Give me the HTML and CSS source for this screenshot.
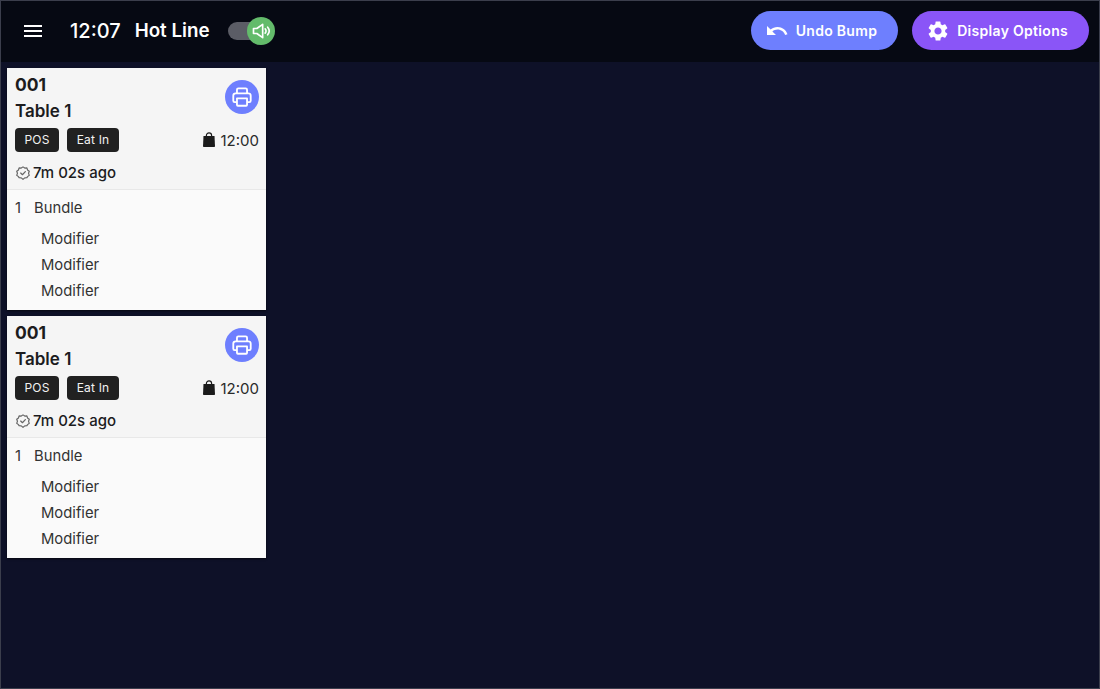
FILE: index.html
```html
<!DOCTYPE html>
<html lang="en">
<head>
    <meta charset="UTF-8">
    <meta name="viewport" content="width=device-width, initial-scale=1.0">
    <title>Hot Line</title>
    <link rel="stylesheet" href="styles.css">
</head>
<body>
    <div class="screen">
        <header class="topbar">
            <button class="menu-btn" aria-label="Menu">
                <svg width="24" height="24" viewBox="0 0 24 24" fill="#fff"><path d="M3 18h18v-2H3v2zm0-5h18v-2H3v2zm0-7v2h18V6H3z"/></svg>
            </button>
            <span class="clock">12:07</span>
            <span class="line-name">Hot Line</span>
            <div class="sound-toggle">
                <div class="sound-track"></div>
                <div class="sound-thumb">
                    <svg width="20" height="20" viewBox="0 0 24 24" fill="none" stroke="#fff" stroke-width="2" stroke-linejoin="round" stroke-linecap="round"><path d="M3 9v6h4l7 5V4L7 9H3z"/><path d="M17 9.500a3.500 3.500 0 0 1 0 5"/><path d="M20 7.500a7 7 0 0 1 0 9"/></svg>
                </div>
            </div>
            <div class="topbar-actions">
                <button class="pill pill-blue">
                    <svg width="24" height="24" viewBox="0 0 24 24" fill="#fff"><path d="M12.5 8c-2.65 0-5.05.99-6.9 2.6L2 7v9h9l-3.62-3.62c1.39-1.16 3.16-1.88 5.12-1.88 3.54 0 6.55 2.31 7.6 5.5l2.37-.78C21.08 11.03 17.15 8 12.5 8z"/></svg>
                    Undo Bump
                </button>
                <button class="pill pill-purple">
                    <svg width="24" height="24" viewBox="0 0 24 24" fill="#fff"><path d="M19.14 12.94c.04-.3.06-.61.06-.94 0-.32-.02-.64-.07-.94l2.03-1.58a.49.49 0 0 0 .12-.61l-1.92-3.32a.488.488 0 0 0-.59-.22l-2.39.96c-.5-.38-1.03-.7-1.62-.94l-.36-2.54a.484.484 0 0 0-.48-.41h-3.84c-.24 0-.43.17-.47.41l-.36 2.54c-.59.24-1.13.57-1.62.94l-2.39-.96c-.22-.08-.47 0-.59.22L2.74 8.87c-.12.21-.08.47.12.61l2.03 1.58c-.05.3-.09.63-.09.94s.02.64.07.94l-2.03 1.58a.49.49 0 0 0-.12.61l1.92 3.32c.12.22.37.29.59.22l2.39-.96c.5.38 1.03.7 1.62.94l.36 2.54c.05.24.24.41.48.41h3.84c.24 0 .44-.17.47-.41l.36-2.54c.59-.24 1.13-.56 1.62-.94l2.39.96c.22.08.47 0 .59-.22l1.92-3.32c.12-.22.07-.47-.12-.61l-2.01-1.58zM12 15.6c-1.98 0-3.6-1.62-3.6-3.6s1.62-3.6 3.6-3.6 3.6 1.62 3.6 3.6-1.62 3.6-3.6 3.6z"/></svg>
                    Display Options
                </button>
            </div>
        </header>

        <main class="orders">
            <article class="ticket">
                <div class="ticket-head">
                    <div class="ticket-top">
                        <div>
                            <div class="ticket-num">001</div>
                            <div class="ticket-table">Table 1</div>
                        </div>
                        <button class="print-btn" aria-label="Print">
                            <svg width="22" height="22" viewBox="0 0 24 24" fill="none" stroke="#fff" stroke-width="2" stroke-linejoin="round"><path d="M6.500 8V4a1.500 1.500 0 0 1 1.500-1.500h8A1.500 1.500 0 0 1 17.500 4v4"/><path d="M6.500 17.500H4A1.500 1.500 0 0 1 2.500 16v-5.500A2.500 2.500 0 0 1 5 8h14a2.500 2.500 0 0 1 2.500 2.500V16a1.500 1.500 0 0 1-1.500 1.500h-2.500"/><path d="M6.500 13.500h11v7a1 1 0 0 1-1 1h-9a1 1 0 0 1-1-1z"/></svg>
                        </button>
                    </div>
                    <div class="ticket-meta">
                        <span class="tag">POS</span>
                        <span class="tag">Eat In</span>
                        <span class="due">
                            <svg width="16" height="16" viewBox="0 0 16 16"><path fill="#1b1b1b" d="M2.500 4h11l.5 10.200a.8.800 0 0 1-.8.800H2.800a.8.800 0 0 1-.8-.800z"/><path fill="none" stroke="#1b1b1b" stroke-width="1.200" d="M5.400 6V3.400a2.600 2.600 0 0 1 5.200 0V6"/></svg>
                            12:00
                        </span>
                    </div>
                    <div class="ticket-age">
                        <svg width="14" height="14" viewBox="0 0 24 24" fill="none" stroke="#666" stroke-width="2" stroke-linecap="round" stroke-linejoin="round"><path d="M12 1.500l3 2.100 3.700-.3 1.100 3.500 3 2.200-1.300 3.500 1.300 3.500-3 2.200-1.100 1.800-3.700.3-3 2.700-3-2.700-3.700-.3-1.100-1.800-3-2.200 1.300-3.500-1.300-3.500 3-2.200 1.100-3.500 3.700.3z"/><path d="M8 12l3 3 5-5.500"/></svg>
                        7m 02s ago
                    </div>
                </div>
                <div class="ticket-body">
                    <div class="item"><span class="qty">1</span>Bundle</div>
                    <div class="modifier">Modifier</div>
                    <div class="modifier">Modifier</div>
                    <div class="modifier">Modifier</div>
                </div>
            </article>

            <article class="ticket">
                <div class="ticket-head">
                    <div class="ticket-top">
                        <div>
                            <div class="ticket-num">001</div>
                            <div class="ticket-table">Table 1</div>
                        </div>
                        <button class="print-btn" aria-label="Print">
                            <svg width="22" height="22" viewBox="0 0 24 24" fill="none" stroke="#fff" stroke-width="2" stroke-linejoin="round"><path d="M6.500 8V4a1.500 1.500 0 0 1 1.500-1.500h8A1.500 1.500 0 0 1 17.500 4v4"/><path d="M6.500 17.500H4A1.500 1.500 0 0 1 2.500 16v-5.500A2.500 2.500 0 0 1 5 8h14a2.500 2.500 0 0 1 2.500 2.500V16a1.500 1.500 0 0 1-1.500 1.500h-2.500"/><path d="M6.500 13.500h11v7a1 1 0 0 1-1 1h-9a1 1 0 0 1-1-1z"/></svg>
                        </button>
                    </div>
                    <div class="ticket-meta">
                        <span class="tag">POS</span>
                        <span class="tag">Eat In</span>
                        <span class="due">
                            <svg width="16" height="16" viewBox="0 0 16 16"><path fill="#1b1b1b" d="M2.500 4h11l.5 10.200a.8.800 0 0 1-.8.800H2.800a.8.800 0 0 1-.8-.800z"/><path fill="none" stroke="#1b1b1b" stroke-width="1.200" d="M5.400 6V3.400a2.600 2.600 0 0 1 5.200 0V6"/></svg>
                            12:00
                        </span>
                    </div>
                    <div class="ticket-age">
                        <svg width="14" height="14" viewBox="0 0 24 24" fill="none" stroke="#666" stroke-width="2" stroke-linecap="round" stroke-linejoin="round"><path d="M12 1.500l3 2.100 3.700-.3 1.100 3.500 3 2.200-1.300 3.500 1.300 3.500-3 2.200-1.100 1.800-3.700.3-3 2.700-3-2.700-3.700-.3-1.100-1.800-3-2.200 1.300-3.500-1.300-3.500 3-2.200 1.100-3.500 3.700.3z"/><path d="M8 12l3 3 5-5.500"/></svg>
                        7m 02s ago
                    </div>
                </div>
                <div class="ticket-body">
                    <div class="item"><span class="qty">1</span>Bundle</div>
                    <div class="modifier">Modifier</div>
                    <div class="modifier">Modifier</div>
                    <div class="modifier">Modifier</div>
                </div>
            </article>
        </main>
    </div>
</body>
</html>
```

FILE: styles.css
```css
html, body {
    margin: 0;
    height: 100%;
}
body {
    font-family: Inter, "Liberation Sans", sans-serif;
    background-color: #0e1128;
}
button {
    font-family: inherit;
    border: none;
    cursor: pointer;
}
.screen {
    box-sizing: border-box;
    height: 689px;
    border: 1px solid #3b3e4c;
    background-color: #0e1128;
    display: flex;
    flex-direction: column;
}
.topbar {
    box-sizing: border-box;
    height: 61px;
    flex-shrink: 0;
    padding: 10px 10px 0 20px;
    display: flex;
    align-items: flex-start;
    background-color: #060913;
    color: #fff;
}
.menu-btn {
    background: none;
    padding: 0;
    width: 24px;
    height: 24px;
    margin-top: 8px;
    display: flex;
}
.clock {
    margin-left: 25px;
    margin-top: 8px;
    font-size: 20px;
    line-height: 24px;
    font-weight: 500;
}
.line-name {
    margin-left: 14px;
    margin-top: 8px;
    font-size: 18.800px;
    line-height: 24px;
    font-weight: 600;
}
.sound-toggle {
    position: relative;
    margin-left: 18px;
    margin-top: 6px;
    width: 47px;
    height: 28px;
}
.sound-track {
    position: absolute;
    left: 0;
    top: 5px;
    width: 38px;
    height: 18px;
    border-radius: 9px;
    background-color: #5b5d66;
}
.sound-thumb {
    position: absolute;
    right: 0;
    top: 0;
    width: 28px;
    height: 28px;
    border-radius: 50%;
    background-color: #63bb6b;
    display: flex;
    align-items: center;
    justify-content: center;
}
.topbar-actions {
    margin-left: auto;
    display: flex;
    gap: 14px;
}
.pill {
    height: 39px;
    border-radius: 20px;
    padding: 0 21px 0 14px;
    display: flex;
    align-items: center;
    gap: 7px;
    color: #fff;
    font-size: 14px;
    font-weight: 600;
    letter-spacing: 0.3px;
}
.pill-blue {
    background-color: #6e7ffe;
}
.pill-purple {
    background-color: #8a55f7;
}
.orders {
    padding: 6px 0 0 6px;
    display: flex;
    flex-direction: column;
    gap: 6px;
}
.ticket {
    width: 259px;
    box-shadow: 0 1px 2px rgba(0, 0, 0, 0.6);
    color: #1c1c1e;
}
.ticket-head {
    box-sizing: border-box;
    height: 122px;
    padding: 6px 7px 0 8px;
    background-color: #f5f5f5;
    border-bottom: 1px solid #e8e8e8;
}
.ticket-top {
    display: flex;
    justify-content: space-between;
}
.ticket-num {
    font-size: 17.500px;
    line-height: 22px;
    font-weight: 700;
}
.ticket-table {
    margin-top: 4px;
    font-size: 17px;
    line-height: 22px;
    font-weight: 600;
}
.print-btn {
    width: 34px;
    height: 34px;
    margin-top: 6px;
    padding: 0;
    border-radius: 50%;
    background-color: #6e7ffe;
    display: flex;
    align-items: center;
    justify-content: center;
}
.ticket-meta {
    margin-top: 6px;
    display: flex;
    align-items: center;
    gap: 8px;
}
.tag {
    height: 24px;
    padding: 0 9.500px;
    border-radius: 4px;
    background-color: #212121;
    color: #f2f2f2;
    font-size: 12px;
    line-height: 23px;
    letter-spacing: 0.2px;
}
.due {
    margin-left: auto;
    display: flex;
    align-items: center;
    gap: 4px;
    font-size: 15px;
    color: #2a2a2a;
}
.ticket-age {
    margin-top: 11px;
    display: flex;
    align-items: center;
    gap: 3px;
    font-size: 15px;
    line-height: 20px;
    font-weight: 500;
}
.ticket-age svg {
    margin-left: 1px;
}
.ticket-body {
    box-sizing: border-box;
    height: 120px;
    padding: 8px 8px 0 8px;
    background-color: #fafafa;
    font-size: 14.800px;
    color: #333;
}
.item {
    line-height: 20px;
    margin-bottom: 8px;
}
.qty {
    display: inline-block;
    width: 19px;
}
.modifier {
    padding-left: 26px;
    line-height: 26px;
}
```
